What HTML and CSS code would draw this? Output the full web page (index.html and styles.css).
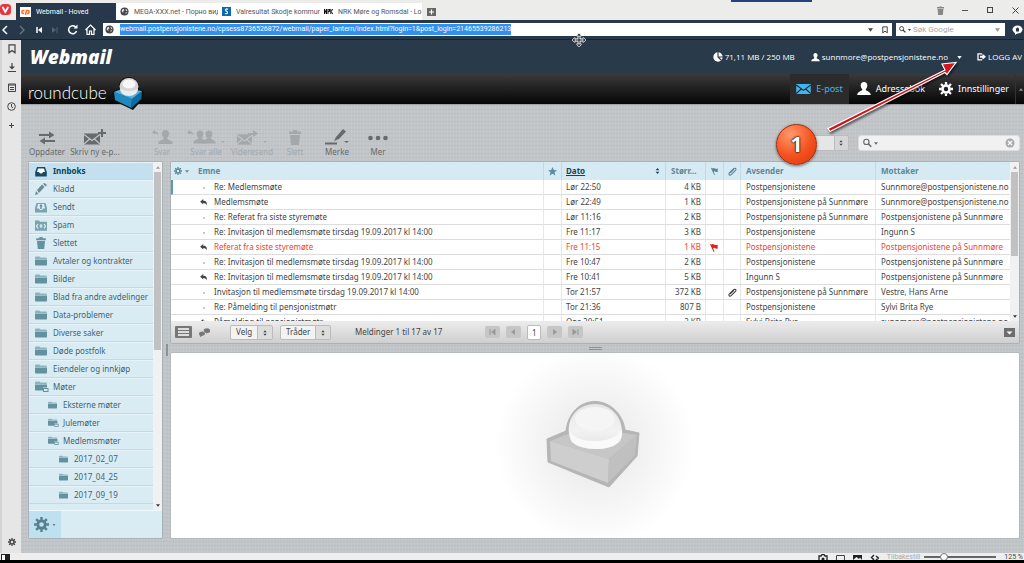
FILE: index.html
```html
<!DOCTYPE html>
<html lang="no">
<head>
<meta charset="utf-8">
<title>Webmail - Hoved</title>
<link rel="stylesheet" href="styles.css">
</head>
<body>
<svg class="sprite" aria-hidden="true">
  <symbol id="folder" viewBox="0 0 12 10"><path d="M0 1.5Q0 .5 1 .5h3.5l1 1H11q.8 0 .8.8V3H0z" fill="#8fb3bd"/><path d="M0 3.4h12V8.700q0 .8-.8.8H.8Q0 9.500 0 8.700z" fill="#63919d"/></symbol>
  <symbol id="folder-minus" viewBox="0 0 14 12"><path d="M0 1.5Q0 .5 1 .5h3.500l1 1H11q.8 0 .8.800V3H0z" fill="#8fb3bd"/><path d="M0 3.400h12V6.500H8V9.500H.8Q0 9.500 0 8.700z" fill="#63919d"/><rect x="8.500" y="7.500" width="4.500" height="3" fill="#d9ecf4" stroke="#63919d"/></symbol>
  <symbol id="globe" viewBox="0 0 10 10"><circle cx="5" cy="5" r="4.500" fill="#444"/><path d="M2 3l2-1 1 1.500L3.500 5 4 7 2 5zM6 2l2 1v2L6.500 4zM6 6l2-.5L6.500 8z" fill="#ddd"/></symbol>
  <symbol id="gear" viewBox="0 0 16 16"><g fill="none" stroke="currentColor"><circle cx="8" cy="8" r="4" stroke-width="3"/><path d="M8 0v3M8 13v3M0 8h3M13 8h3M2.300 2.300l2.200 2.200M11.500 11.500l2.200 2.200M2.300 13.700l2.200-2.200M11.500 4.500l2.200-2.200" stroke-width="2.600"/></g></symbol>
  <symbol id="updown" viewBox="0 0 6 8"><path d="M3 0l2.500 3h-5zM3 8L.5 5h5z" fill="currentColor"/></symbol>
  <symbol id="down" viewBox="0 0 6 4"><path d="M0 0h6L3 4z" fill="currentColor"/></symbol>
  <symbol id="up" viewBox="0 0 6 4"><path d="M0 4h6L3 0z" fill="currentColor"/></symbol>
  <symbol id="reply" viewBox="0 0 10 9"><path d="M4 0v2.200c4 0 5.500 2 4 6.300 0-2.500-1.300-3.500-4-3.500v2L0 3.500z" fill="currentColor"/></symbol>
  <symbol id="person" viewBox="0 0 14 14"><path d="M7 0c2 0 3.300 1.500 3.300 3.500 0 1.500-.6 2.800-1.500 3.600v1.200c1.200.8 4.700 1.300 5 4.700H.2c.3-3.400 3.800-3.900 5-4.700V7.100c-.9-.8-1.500-2.100-1.500-3.600C3.700 1.500 5 0 7 0z" fill="currentColor"/></symbol>
  <symbol id="mail" viewBox="0 0 16 11"><path d="M0 0h16v11H0z" fill="currentColor"/><path d="M0 1l8 6 8-6M0 10.500l5.500-5M16 10.500l-5.500-5" fill="none" stroke="var(--line)" stroke-width="1.200"/></symbol>
  <symbol id="trash" viewBox="0 0 12 15"><path d="M4 0h4v1.500h4V4H0V1.500h4zM1 5h10l-1 10H2z" fill="currentColor"/></symbol>
  <symbol id="clip" viewBox="0 0 10 10"><path d="M2.500 6.500l4-4M3.500 8.500l5-5c1-1.500-.5-2.800-2-1.800l-5 4.800c-1.300 1.500.5 3.500 2 2l4-4" fill="none" stroke="currentColor" stroke-width="1.200"/></symbol>
  <symbol id="flag" viewBox="0 0 10 10"><path d="M0 1.500L1.200 1l.6 1C3 .5 4 1.500 5 2s2 .2 3.500 0v4C7 6.800 6 6 5 5.500S3.800 6 3.500 6.500L5 9.500l-1 .5z" fill="currentColor"/></symbol>
  <symbol id="search" viewBox="0 0 12 12"><circle cx="4.500" cy="4.500" r="3.500" fill="none" stroke="currentColor" stroke-width="1.500"/><path d="M7 7l4 4" stroke="currentColor" stroke-width="2.200"/></symbol>
  <symbol id="bookmark" viewBox="0 0 8 10"><path d="M1 .8h6v8L4 6.500 1 8.800z" fill="none" stroke="currentColor" stroke-width="1.200"/></symbol>
</svg>

<div class="tabstrip">
  <span class="vivaldi"><svg width="11" height="11" viewBox="0 0 11 11"><rect width="11" height="11" rx="3.500" fill="#e5373f"/><path d="M2.800 3.500l2.500 4.500 2.600-4.500" fill="none" stroke="#fff" stroke-width="1.800" stroke-linecap="round"/></svg></span>
  <button class="tab active"><svg width="11" height="10" viewBox="0 0 11 10"><rect width="11" height="10" fill="#fff"/><path d="M4.500 3.500H3.300a1.500 1.500 0 000 3h.8M5.500 8l1-4.500h1.200a1.500 1.500 0 010 3H7" fill="none" stroke="#ff6c2c" stroke-width="1.500"/></svg><span>Webmail - Hoved</span></button>
  <button class="tab"><svg width="9" height="9"><use href="#globe"/></svg><span>MEGA-XXX.net - Порно вид</span></button>
  <button class="tab"><svg width="9" height="9" viewBox="0 0 9 9"><rect width="9" height="9" fill="#0d69a8"/><path d="M6 2.200C4 1.200 2.500 3 4.500 4.300s.8 3-1.500 2.200" fill="none" stroke="#fff" stroke-width="1.100"/></svg><span>Valresultat Skodje kommun</span></button>
  <button class="tab"><svg width="9" height="5" viewBox="0 0 9 5"><path d="M.5 5V0M2.500 5V0M.5 0l2 5M4 5V0h1.500v2.500H4M6.800 5V0M9 0L7 2.500 9 5" fill="none" stroke="#111"/></svg><span>NRK Møre og Romsdal - Lo</span></button>
  <button class="newtab" aria-label="Ny fane"><svg width="9" height="8" viewBox="0 0 9 8"><rect width="9" height="8" fill="#666"/><path d="M4.500 1.500v5M2 4h5" stroke="#fff" stroke-width="1.200"/></svg></button>
  <span class="peek"></span>
  <div class="window-controls">
    <button aria-label="Lukkede faner"><svg width="7" height="9" viewBox="0 0 12 15" color="#888"><use href="#trash"/></svg></button>
    <button aria-label="Minimer"><svg width="7" height="7"><path d="M0 3.500h6" stroke="#555"/></svg></button>
    <button aria-label="Maksimer"><svg width="7" height="7"><rect x=".5" y=".5" width="5" height="5" fill="none" stroke="#444"/></svg></button>
    <button aria-label="Lukk"><svg width="7" height="7"><path d="M.5.5l6 6M6.500.5l-6 6" stroke="#444"/></svg></button>
  </div>
</div>

<div class="navbar">
  <div class="nav-buttons">
    <button aria-label="Tilbake"><svg width="10" height="10"><path d="M7 1L3 5l4 4" fill="none" stroke="#fff" stroke-width="1.500"/></svg></button>
    <button aria-label="Frem"><svg width="10" height="10"><path d="M3 1l4 4-4 4" fill="none" stroke="#6c7882" stroke-width="1.300"/></svg></button>
    <button aria-label="Første"><svg width="10" height="10"><path d="M3 2v6" stroke="#fff" stroke-width="1.500"/><path d="M8 2v6L4 5z" fill="#fff"/></svg></button>
    <button aria-label="Siste"><svg width="10" height="10"><path d="M7 2v6" stroke="#56636f"/><path d="M2 2v6l4-3z" fill="#56636f"/></svg></button>
    <button aria-label="Last på nytt"><svg width="11" height="11"><path d="M9 3.500A4 4 0 109.500 7" fill="none" stroke="#fff" stroke-width="1.500"/><path d="M6.500 4.500H10.500V.5z" fill="#fff"/></svg></button>
    <button aria-label="Hjem"><svg width="11" height="11"><path d="M.5 6l5-5 5 5M2 5v5.300h2.500V7h2v3.300H9V5" fill="none" stroke="#fff" stroke-width="1.200"/></svg></button>
  </div>
  <div class="address">
    <svg class="site" width="9" height="9"><use href="#globe"/></svg>
    <input aria-label="Adresse" value="webmail.postpensjonistene.no/cpsess8736526872/webmail/paper_lantern/index.html?login=1&amp;post_login=21465539286213">
    <svg class="push" width="5" height="4" color="#444"><use href="#down"/></svg>
    <svg width="6" height="8" color="#333"><use href="#bookmark"/></svg>
  </div>
  <div class="web-search">
    <svg width="7" height="7" color="#333"><use href="#search"/></svg>
    <svg width="3" height="2" color="#333"><use href="#down"/></svg>
    <input aria-label="Søk" placeholder="Søk Google">
    <svg width="5" height="4" color="#999"><use href="#down"/></svg>
  </div>
  <svg class="bubble" width="11" height="10"><ellipse cx="5.500" cy="4.500" rx="5" ry="4" fill="#fff"/><path d="M3 7v3l4-3z" fill="#fff"/><path d="M4 6.500V4a1.500 1.500 0 013 0v2.500z" fill="#26384a"/></svg>
</div>

<div class="workspace">
  <nav class="rail">
    <button aria-label="Bokmerker"><svg width="8" height="10" color="#444"><use href="#bookmark"/></svg></button>
    <button aria-label="Nedlastinger"><svg width="8" height="10"><path d="M4 0v5M0 8.500h8" stroke="#444" stroke-width="1.200"/><path d="M1 3.500h6l-3 3z" fill="#444"/></svg></button>
    <button aria-label="Notater"><svg width="8" height="9"><path d="M.5 1h7v7.500h-7zM.5 2h7M2 4.500h4M2 6.500h4" fill="none" stroke="#444"/></svg></button>
    <button aria-label="Historikk"><svg width="9" height="9"><circle cx="4.500" cy="4.500" r="3.800" fill="none" stroke="#444"/><path d="M4.500 2v2.800l1.500 1" fill="none" stroke="#444"/></svg></button>
    <button aria-label="Legg til"><svg width="5" height="5"><path d="M2.500 0v5M0 2.500h5" stroke="#444"/></svg></button>
    <button class="rail-end" aria-label="Innstillinger"><svg width="8" height="8" color="#444"><use href="#gear"/></svg></button>
  </nav>

  <div class="page">
    <header class="cpanel">
      <a class="brand" href="#">Webmail</a>
      <span class="quota"><svg width="10" height="10"><circle cx="5" cy="5" r="4.700" fill="#fff"/><path d="M5 0v5l3.500 3.500M5 5h5" fill="none" stroke="#293a4a" stroke-width="1.100"/></svg>71,11 MB / 250 MB</span>
      <a class="user" href="#"><svg width="9" height="9"><use href="#person"/></svg>sunnmore@postpensjonistene.no</a>
      <button class="user-menu" aria-label="Brukermeny"><svg width="5" height="3"><use href="#down"/></svg></button>
      <a class="logout" href="#"><svg width="9" height="8"><path d="M5 .8H1v6h4" fill="none" stroke="#fff" stroke-width="1.300"/><path d="M3 2.800h2.500V.8L9 3.800 5.500 6.800v-2H3z" fill="#fff"/></svg>LOGG AV</a>
    </header>

    <header class="taskbar">
      <a class="logo" href="#">roundcube
        <svg width="32" height="33" viewBox="0 0 32 33">
          <path d="M0 15L7 12C6 4 11 0 17 0s11 5 10 12l5 2-1 8-10 11L2 24z" fill="#111"/>
          <path d="M2 15l18 7-.5 9L3 23z" fill="#1f8ac0"/><path d="M20 22l10-8-.7 8-9.800 9z" fill="#0e6ba6"/><path d="M2 15l10-4 18 3-10 8z" fill="#4fb2dc"/>
          <ellipse cx="17" cy="9.500" rx="9.500" ry="8.500" fill="#d3d4d4"/><ellipse cx="17" cy="7" rx="6.500" ry="4.500" fill="#f7f7f7"/><path d="M8 12q9 4 18 0-1 7-9 7t-9-7z" fill="#ececec"/>
        </svg>
      </a>
      <nav class="tasks">
        <a class="task current" href="#"><svg class="on-dark" width="15" height="10"><use href="#mail"/></svg>E-post</a>
        <a class="task" href="#"><svg width="14" height="14"><use href="#person"/></svg>Adressebok</a>
        <a class="task" href="#"><svg width="14" height="14"><use href="#gear"/></svg>Innstillinger</a>
        <button class="collapse" aria-label="Skjul"><svg width="4" height="3"><use href="#up"/></svg></button>
      </nav>
    </header>

    <main class="mail">
      <div class="toolbar">
        <button class="tool"><svg width="16" height="14"><path d="M0 4h11M5 10h11" stroke="currentColor" stroke-width="2"/><path d="M10 .5L15.500 4 10 7.500zM6 6.500L.5 10 6 13.500z" fill="currentColor"/></svg>Oppdater</button>
        <button class="tool compose"><svg class="on-light" width="22" height="16" viewBox="0 0 22 16"><svg y="4" width="16" height="12"><use href="#mail"/></svg><path d="M18 0v8M14 4h8" stroke="currentColor" stroke-width="2"/></svg>Skriv ny e-p...</button>
        <button class="tool reply-one" disabled><svg width="21" height="15" viewBox="0 0 21 15"><svg width="7" height="6"><use href="#reply"/></svg><svg x="6" width="15" height="15"><use href="#person"/></svg></svg>Svar</button>
        <button class="tool reply-all" disabled><svg width="38" height="15" viewBox="0 0 38 15"><svg width="7" height="6"><use href="#reply"/></svg><svg x="6" width="14" height="15"><use href="#person"/></svg><svg x="15" width="14" height="15"><use href="#person"/></svg><svg x="34" y="11" width="4" height="2"><use href="#down"/></svg></svg>Svar alle</button>
        <button class="tool forward" disabled><svg class="on-light" width="30" height="15" viewBox="0 0 30 15"><svg y="4" width="15" height="11"><use href="#mail"/></svg><path d="M11 3h5V0l5 3.500-5 3.500V5h-5z" fill="currentColor"/><svg x="26" y="11" width="4" height="2"><use href="#down"/></svg></svg>Videresend</button>
        <button class="tool delete" disabled><svg width="12" height="15"><use href="#trash"/></svg>Slett</button>
        <button class="tool mark"><svg width="24" height="16"><path d="M0 14.500h12" stroke="currentColor" stroke-width="2"/><path d="M9 12l2-4 7-8 3 2.500-7 7.500zM19 12h5l-2.500 2z" fill="currentColor"/></svg>Merke</button>
        <button class="tool more"><svg width="20" height="6"><circle cx="2.500" cy="3" r="2.300" fill="currentColor"/><circle cx="10" cy="3" r="2.300" fill="currentColor"/><circle cx="17.500" cy="3" r="2.300" fill="currentColor"/></svg>Mer</button>
        <span class="picker filter"><select aria-label="Filter"><option value=""></option></select><svg width="4" height="6"><use href="#updown"/></svg></span>
        <div class="mail-search"><svg width="9" height="10"><use href="#search"/></svg><svg width="4" height="3"><use href="#down"/></svg><input aria-label="Søk i e-post"><svg width="10" height="10"><circle cx="5" cy="5" r="4.500" fill="#aaa"/><path d="M3 3l4 4M7 3L3 7" stroke="#fff" stroke-width="1.200"/></svg></div>
      </div>

      <div class="panes">
        <aside class="folders">
          <div class="folder-scroll">
            <ul>
              <li class="selected"><a href="#"><svg width="12" height="11"><path d="M2 1h8l1.800 5v4.500H.2V6z" fill="#174a66"/><path d="M3 2.500h6L10 6H8q-.5 1.500-2 1.500T4 6H2z" fill="#fff"/></svg>Innboks</a></li>
              <li><a href="#"><svg width="12" height="12"><path d="M0 12l1-4 2.500 3zM2 7l5-5.500 2.500 2.500L4 10zM8 .8L9.500 0 12 2l-1.500 1.500z" fill="#6d8b94"/></svg>Kladd</a></li>
              <li><a href="#"><svg width="12" height="11"><path d="M1.500 1h9L12 6v4.500H0V6z" fill="#7ba2ad"/><path d="M3 2h6l1 4.500H8L7 8H5L4 6.500H2z" fill="#e3f2f8"/><path d="M6 2l2 2.300H6.800V7H5.200V4.300H4z" fill="#63919d"/></svg>Sendt</a></li>
              <li><a href="#"><svg width="12" height="11"><path d="M0 .5h4l1 1.200h7v9H0z" fill="#7ba2ad"/><path d="M3 4l-1.500 2L3 8.500M9 4l1.500 2L9 8.500M6 4v4M4.500 6h3" fill="none" stroke="#e3f2f8" stroke-width="1.200"/></svg>Spam</a></li>
              <li><a href="#"><svg width="12" height="12" color="#63919d"><use href="#trash"/></svg>Slettet</a></li>
              <li><a href="#"><svg width="12" height="10"><use href="#folder"/></svg>Avtaler og kontrakter</a></li>
              <li><a href="#"><svg width="12" height="10"><use href="#folder"/></svg>Bilder</a></li>
              <li><a href="#"><svg width="12" height="10"><use href="#folder"/></svg>Blad fra andre avdelinger</a></li>
              <li><a href="#"><svg width="12" height="10"><use href="#folder"/></svg>Data-problemer</a></li>
              <li><a href="#"><svg width="12" height="10"><use href="#folder"/></svg>Diverse saker</a></li>
              <li><a href="#"><svg width="12" height="10"><use href="#folder"/></svg>Døde postfolk</a></li>
              <li><a href="#"><svg width="12" height="10"><use href="#folder"/></svg>Eiendeler og innkjøp</a></li>
              <li class="parent"><a href="#"><svg width="14" height="12"><use href="#folder-minus"/></svg>Møter</a></li>
              <li class="level2"><a href="#"><svg width="9" height="8"><use href="#folder"/></svg>Eksterne møter</a></li>
              <li class="level2 parent"><a href="#"><svg width="11" height="10"><use href="#folder-minus"/></svg>Julemøter</a></li>
              <li class="level2 parent"><a href="#"><svg width="11" height="10"><use href="#folder-minus"/></svg>Medlemsmøter</a></li>
              <li class="level3"><a href="#"><svg width="9" height="8"><use href="#folder"/></svg>2017_02_07</a></li>
              <li class="level3"><a href="#"><svg width="9" height="8"><use href="#folder"/></svg>2017_04_25</a></li>
              <li class="level3"><a href="#"><svg width="9" height="8"><use href="#folder"/></svg>2017_09_19</a></li>
            </ul>
            <div class="scrollbar"><svg width="4" height="3"><use href="#up"/></svg><span class="thumb"></span><svg class="end" width="4" height="3"><use href="#down"/></svg></div>
          </div>
          <div class="folder-foot"><button aria-label="Mappehandlinger"><svg width="15" height="15"><use href="#gear"/></svg><svg width="4" height="2"><use href="#down"/></svg></button></div>
        </aside>
        <div class="splitter-v"></div>
        <div class="content">
          <section class="list">
            <div class="list-scroll">
              <div class="table-clip">
              <table>
                <colgroup><col class="c-subject"><col class="c-star"><col class="c-date"><col class="c-size"><col class="c-flag"><col class="c-clip"><col class="c-from"><col class="c-to"></colgroup>
                <thead><tr>
                  <th><div class="subject-head"><button aria-label="Listevalg"><svg width="8" height="8"><use href="#gear"/></svg><svg width="4" height="3"><use href="#down"/></svg></button>Emne</div></th>
                  <th class="mid"><svg width="9" height="9" viewBox="0 0 10 10"><path d="M5 0l1.500 3.300 3.500.3-2.700 2.300.8 3.600L5 7.600 1.900 9.500l.8-3.600L0 3.600l3.500-.3z" fill="#5c8fa6"/></svg></th>
                  <th><div class="date-head"><a href="#">Dato</a><svg width="5" height="6"><use href="#updown"/></svg></div></th>
                  <th>Størr...</th>
                  <th class="mid"><svg width="8" height="8"><use href="#flag"/></svg></th>
                  <th class="mid"><svg width="9" height="9"><use href="#clip"/></svg></th>
                  <th>Avsender</th><th>Mottaker</th>
                </tr></thead>
                <tbody>
                  <tr class="focused"><td><span class="state dot"></span>Re: Medlemsmøte</td><td></td><td>Lør 22:50</td><td>4 KB</td><td></td><td></td><td>Postpensjonistene</td><td>Sunnmore@postpensjonistene.no</td></tr>
                  <tr><td><span class="state"><svg width="8" height="7"><use href="#reply"/></svg></span>Medlemsmøte</td><td></td><td>Lør 22:49</td><td>1 KB</td><td></td><td></td><td>Postpensjonistene på Sunnmøre</td><td>Sunnmore@postpensjonistene.no</td></tr>
                  <tr><td><span class="state dot"></span>Re: Referat fra siste styremøte</td><td></td><td>Lør 11:16</td><td>2 KB</td><td></td><td></td><td>Postpensjonistene på Sunnmøre</td><td>Postpensjonistene på Sunnmøre</td></tr>
                  <tr><td><span class="state dot"></span>Re: Invitasjon til medlemsmøte tirsdag 19.09.2017 kl 14:00</td><td></td><td>Fre 11:17</td><td>3 KB</td><td></td><td></td><td>Postpensjonistene</td><td>Ingunn S</td></tr>
                  <tr class="flagged"><td><span class="state"><svg width="8" height="7"><use href="#reply"/></svg></span>Referat fra siste styremøte</td><td></td><td>Fre 11:15</td><td>1 KB</td><td class="mid"><svg width="9" height="9"><use href="#flag"/></svg></td><td></td><td>Postpensjonistene</td><td>Postpensjonistene på Sunnmøre</td></tr>
                  <tr><td><span class="state dot"></span>Re: Invitasjon til medlemsmøte tirsdag 19.09.2017 kl 14:00</td><td></td><td>Fre 10:47</td><td>2 KB</td><td></td><td></td><td>Postpensjonistene</td><td>Postpensjonistene på Sunnmøre</td></tr>
                  <tr><td><span class="state"><svg width="8" height="7"><use href="#reply"/></svg></span>Re: Invitasjon til medlemsmøte tirsdag 19.09.2017 kl 14:00</td><td></td><td>Fre 10:41</td><td>5 KB</td><td></td><td></td><td>Ingunn S</td><td>Postpensjonistene på Sunnmøre</td></tr>
                  <tr><td><span class="state dot"></span>Invitasjon til medlemsmøte tirsdag 19.09.2017 kl 14:00</td><td></td><td>Tor 21:57</td><td>372 KB</td><td></td><td class="mid"><svg width="9" height="9"><use href="#clip"/></svg></td><td>Postpensjonistene på Sunnmøre</td><td>Vestre, Hans Arne</td></tr>
                  <tr><td><span class="state dot"></span>Re: Påmelding til pensjonistmøtr</td><td></td><td>Tor 21:36</td><td>807 B</td><td></td><td></td><td>Postpensjonistene</td><td>Sylvi Brita Rye</td></tr>
                  <tr><td><span class="state"><svg width="8" height="7"><use href="#reply"/></svg></span>Påmelding til pensjonistmøtr</td><td></td><td>Ons 20:51</td><td>2 KB</td><td></td><td></td><td>Sylvi Brita Rye</td><td>sunnmore@postpensjonistene.no</td></tr>
                </tbody>
              </table>
              </div>
              <div class="scrollbar"><svg width="4" height="3"><use href="#up"/></svg><span class="thumb"></span><svg class="end" width="4" height="3"><use href="#down"/></svg></div>
            </div>
            <div class="list-foot">
              <button class="mode" aria-label="Liste"><svg width="17" height="12"><rect width="17" height="12" rx="1" fill="#777"/><path d="M3 3h11M3 6h11M3 9h11" stroke="#fff" stroke-width="1.300"/></svg></button>
              <button class="mode threads" aria-label="Samtaler"><svg width="11" height="9"><path d="M5 1q5-2 6 1t-3 3L7 6V5Q4 4 5 1zM1 4q3-1 4 0t1 2-3 2L1 9V8Q-1 5 1 4z" fill="#777"/></svg></button>
              <span class="picker"><select aria-label="Velg"><option>Velg</option></select><svg width="4" height="6"><use href="#updown"/></svg></span>
              <span class="picker wide"><select aria-label="Tråder"><option>Tråder</option></select><svg width="4" height="6"><use href="#updown"/></svg></span>
              <span class="count">Meldinger 1 til 17 av 17</span>
              <div class="pager">
                <button disabled aria-label="Første side"><svg width="7" height="6"><path d="M1 0v6M6 0v6" stroke="#999"/><path d="M6 0v6L2 3z" fill="#999"/></svg></button>
                <button disabled aria-label="Forrige side"><svg width="7" height="6"><path d="M5 0v6L1 3z" fill="#999"/></svg></button>
                <input aria-label="Side" value="1">
                <button disabled aria-label="Neste side"><svg width="7" height="6"><path d="M2 0v6l4-3z" fill="#999"/></svg></button>
                <button disabled aria-label="Siste side"><svg width="7" height="6"><path d="M1 0v6M6 0v6" stroke="#999"/><path d="M1 0v6l4-3z" fill="#999"/></svg></button>
              </div>
              <button class="mode preview-toggle" aria-label="Forhåndsvisning"><svg width="11" height="9"><rect width="11" height="9" fill="#6d6d6d"/><path d="M2.500 3.500h6l-3 3z" fill="#fff"/></svg></button>
            </div>
          </section>
          <div class="splitter-h"></div>
          <section class="preview">
            <svg width="150" height="150" viewBox="0 0 150 150">
              <defs><linearGradient id="ball" x1="0" y1="0" x2="0" y2="1"><stop offset="0" stop-color="#e6e6e6"/><stop offset=".6" stop-color="#f2f2f2"/><stop offset="1" stop-color="#e2e2e2"/></linearGradient></defs>
              <path d="M27 68l19-8C48 42 60 30.500 75 30.500S103 43 105 59l14 3-2 23-28 31L28 91z" fill="#b5b5b5" stroke="#b5b5b5" stroke-width="1"/>
              <path d="M30 70l18-7 56-1 13 2-28 24z" fill="#c6c6c6"/><path d="M30 70l59 18-1 24-57-22z" fill="#cecece"/><path d="M89 88l28-24-2 20-27 28z" fill="#c0c0c0"/>
              <path d="M49 63C47 44 60 33 75 33s27 12 27 28c0 11-12 17-26 17s-26-5-27-15z" fill="url(#ball)"/>
              <path d="M50 60q5 10 25 10t27-12q1 10-4 14-7 6-22 6-17 0-24-7-3-4-2-11z" fill="#f9f9f9"/>
              <ellipse cx="75" cy="48" rx="20" ry="12" fill="#f5f5f5"/>
            </svg>
          </section>
        </div>
      </div>
    </main>
  </div>
</div>

<footer class="status">
  <button class="panel-toggle" aria-label="Panel"><svg width="9" height="6"><rect x=".5" y=".5" width="8" height="7" fill="#fff" stroke="#222"/><path d="M4 0h5v6H4z" fill="#222"/></svg></button>
  <svg width="10" height="6"><path d="M1 6V2h2l1-1.500h2L7 2h2v4" fill="none" stroke="#222" stroke-width="1.300"/><circle cx="5" cy="5" r="1.500" fill="#222"/></svg>
  <svg width="9" height="6"><path d="M.5 6V1.500h8V6" fill="none" stroke="#444"/></svg>
  <svg width="9" height="6"><path d="M0 6V1h9v5L7 3.500 6 5 3.500 3z" fill="#222"/></svg>
  <svg width="9" height="6"><path d="M4 1L1.500 3.500 4 6M6 2l2.500 2L6 6" fill="none" stroke="#222" stroke-width="1.400"/></svg>
  <label for="zoom">Tilbakestill</label>
  <input id="zoom" type="range" min="20" max="500" value="135">
  <span>125 %</span>
</footer>

<svg class="cursor" width="14" height="14" viewBox="0 0 14 14"><path d="M7 1v12M1 7h12" stroke="#fff" stroke-width="3"/><path d="M7 1v12M1 7h12" stroke="#111" stroke-width="1"/><path d="M7 0l2.500 3h-5zM7 14l2.500-3h-5zM0 7l3-2.500v5zM14 7l-3-2.500v5z" fill="#111" stroke="#fff" stroke-width=".7"/></svg>
<svg class="arrow" width="150" height="80" viewBox="0 0 150 80"><path d="M8 69.500L125 11l-3-6L136 3.500l-9 12-2-2L10 72.500z" fill="#d0151c" stroke="#fff" stroke-width="1.200"/></svg>
<div class="marker">1</div>
</body>
</html>
```

FILE: styles.css
```css
* { box-sizing: border-box; }
body {
  margin: 0;
  height: 100vh;
  display: flex;
  flex-direction: column;
  position: relative;
  overflow: hidden;
  background: #ebebeb;
  font: 8px/12px "Noto Sans", sans-serif;
  color: #444;
}
button, input, select { font: inherit; color: inherit; border: 0; padding: 0; margin: 0; background: none; outline: 0; min-width: 0; }
a { color: inherit; text-decoration: none; }
svg { flex: none; display: block; }
.sprite { position: absolute; width: 0; height: 0; }

/* Browser chrome */
.tabstrip { display: flex; height: 20px; align-items: flex-end; background: #ececeb; color: #555; font: 7px/12px Roboto, sans-serif; flex: none; }
.vivaldi { width: 16px; height: 16px; flex: none; }
.tab { width: 102px; height: 17px; display: flex; align-items: center; gap: 5px; padding: 0 2px 0 4px; background: #fff; white-space: nowrap; flex: none; }
.tab.active { width: 100px; background: #26384a; color: #fff; }
.newtab { height: 17px; padding: 0 5px; }
.peek { width: 81px; height: 2px; background: #24427c; align-self: flex-start; margin-left: auto; }
.window-controls { display: flex; gap: 18px; height: 20px; align-items: center; padding: 0 5px 0 125px; }
.navbar { height: 20px; flex: none; display: flex; align-items: center; background: #26384a; border-bottom: 1px solid #17222d; padding-right: 1px; font: 7px/11px Roboto, sans-serif; }
.nav-buttons { width: 103px; display: flex; align-items: center; justify-content: space-between; padding: 0 7px 0 0; flex: none; }
.address { flex: 1; height: 13px; background: #fff; display: flex; align-items: center; gap: 9px; padding: 0 4px 0 2px; }
.address input { field-sizing: content; height: 11px; background: #3390f0; color: #fff; }
.address .site { margin-right: -3px; }
.push { margin-left: auto; }
.web-search { width: 109px; height: 13px; margin: 0 7px 0 4px; background: #fff; display: flex; align-items: center; gap: 2px; padding: 0 5px 0 3px; }
.web-search input { flex: 1; font-size: 8px; }
.web-search input::placeholder { color: #aaa; }

.workspace { flex: 1; min-height: 0; display: flex; }
.rail { width: 21px; flex: none; background: #e6e6e6; border-left: 2px solid #d3d3d3; display: flex; flex-direction: column; align-items: center; gap: 9px; padding: 4px 0 6px; }
.rail button { height: 10px; display: flex; align-items: center; }
.rail .rail-end { margin-top: auto; }
.page { flex: 1; min-width: 0; display: flex; flex-direction: column; }

/* Account header */
.cpanel { height: 34px; flex: none; background: #293a4a; color: #fff; display: flex; align-items: center; padding: 0 2px 0 9px; font: 8px/12px "Open Sans", sans-serif; }
.brand { font: italic 800 19px/24px "Open Sans", sans-serif; margin-right: auto; }
.quota, .user, .logout { display: flex; align-items: center; gap: 2px; }
.user { margin-left: 16px; }
.user-menu { margin: 0 15px 0 9px; }

/* Task bar */
.taskbar { height: 30px; flex: none; background: linear-gradient(#3a3a3a, #060606); color: #fff; display: flex; justify-content: space-between; font-size: 9px; }
.logo { display: flex; align-items: center; gap: 5px; padding: 4px 0 0 7px; font: 300 17px/26px "Lato", sans-serif; height: 34px; position: relative; z-index: 1; }
.tasks { display: flex; }
.task { display: flex; align-items: center; gap: 5px; padding: 0 6px; }
.task + .task { padding-left: 8px; }
.task.current { background: #2b2b2b; color: #3db8ef; }
.on-dark { --line: #222; }
.on-light { --line: #c1c5c8; }
.collapse { width: 9px; padding-left: 3px; border-left: 1px solid #333; color: #999; }

/* Mail */
.mail {
  flex: 1; min-height: 0; display: flex; flex-direction: column; padding: 0 4px 14px 7px;
  border-top: 1px solid #9fa3a5;
  background: repeating-linear-gradient(90deg, #ffffff10 0 1px, #0000 1px 3px), repeating-linear-gradient(#00000008 0 1px, #0000 1px 4px), #c1c5c8;
}
.toolbar { height: 56px; flex: none; display: flex; align-items: flex-end; padding-bottom: 3px; color: #666a6c; }
.tool { width: 38px; height: 32px; display: flex; flex-direction: column; align-items: center; justify-content: flex-end; gap: 1px; white-space: nowrap; line-height: 12px; }
.tool:disabled { color: #a3a8ab; }
.compose { width: 58px; }
.reply-one { width: 38px; margin-left: 19px; }
.reply-all { width: 50px; }
.forward { width: 42px; }
.delete { width: 44px; }
.mark { width: 40px; }
.more { width: 42px; gap: 5px; }
.picker { position: relative; display: flex; color: #444; }
.picker select { appearance: none; width: 43px; height: 15px; padding: 0 5px; border: 1px solid #bbb; border-radius: 2px; background: linear-gradient(90deg, #f3f3f3 0 26px, #bbb 26px 27px, #ddd 27px); }
.picker.wide select { width: 51px; background: linear-gradient(90deg, #f3f3f3 0 34px, #bbb 34px 35px, #ddd 35px); }
.picker svg { position: absolute; right: 6px; top: 5px; }
.picker.filter { margin: 0 9px 7px auto; }
.picker.filter select { width: 71px; height: 16px; background: linear-gradient(90deg, #e6e6e6 0 55px, #bbb 55px 56px, #d4d6d7 56px); }
.mail-search { width: 162px; height: 16px; margin-bottom: 7px; background: #f1f1f1; border: 1px solid #ddd; border-radius: 3px; display: flex; align-items: center; gap: 2px; padding: 0 4px; }
.mail-search input { flex: 1; }

.panes { flex: 1; min-height: 0; display: flex; }
.folders { width: 135px; flex: none; display: flex; flex-direction: column; background: #d9ecf4; border: 1px solid #a9b2b7; border-radius: 2px; overflow: hidden; color: #3f6470; }
.folder-scroll { flex: 1; min-height: 0; display: flex; }
.folders ul { flex: 1; margin: 0; padding: 0; list-style: none; overflow: hidden; }
.folders li { height: 18px; border-bottom: 1px solid #c3dae4; border-top: 1px solid #e6f4fa; }
.folders a { display: flex; align-items: center; height: 16px; gap: 6px; padding-left: 6px; white-space: nowrap; }
.folders .selected { background: #c4e0ee; color: #004458; font-weight: bold; }
.level2 a { padding-left: 19px; }
.level3 a { padding-left: 30px; }
.parent a { gap: 4px; }
.scrollbar { width: 9px; flex: none; background: #f1f1f1; display: flex; flex-direction: column; align-items: center; padding: 4px 0 3px; gap: 3px; color: #999; }
.thumb { width: 7px; height: 178px; background: #c1c1c1; }
.list .thumb { height: 84px; }
.scrollbar .end { margin-top: auto; color: #333; }
.folder-foot { height: 28px; flex: none; border-top: 1px solid #eef8fc; display: flex; }
.folder-foot button { width: 32px; background: #bfe0ee; display: flex; align-items: center; justify-content: center; gap: 3px; color: #56808d; }
.splitter-v { width: 7px; flex: none; background: linear-gradient(#8d9295, #8d9295) center / 2px 12px no-repeat; }
.content { flex: 1; min-width: 0; display: flex; flex-direction: column; }
.list { height: 183px; flex: none; display: flex; flex-direction: column; background: #fff; border: 1px solid #a9b2b7; border-radius: 2px; }
.list-scroll { flex: 1; min-height: 0; display: flex; }
.table-clip { flex: 1; min-width: 0; overflow: hidden; }
table { width: 100%; table-layout: fixed; border-collapse: separate; border-spacing: 0; }
.c-star { width: 18px; }
.c-date { width: 104px; }
.c-size { width: 40px; }
.c-flag { width: 18px; }
.c-clip { width: 17px; }
.c-from, .c-to { width: 135px; }
th { height: 18px; padding: 0 5px; text-align: left; background: #d6eaf3; color: #5c8699; border-left: 1px solid #c3dae4; font-weight: bold; white-space: nowrap; }
td { height: 15px; padding: 0 5px; border-left: 1px solid #e3e9ec; border-bottom: 1px solid #ddd; white-space: nowrap; line-height: 12px; overflow: hidden; }
th:first-child, td:first-child { border-left: 0; }
th:first-child { padding-left: 3px; }
td:first-child { padding-left: 29px; }
td:nth-child(4) { text-align: right; padding-right: 4px; }
td:nth-child(3), th:nth-child(3) { padding-left: 4px; }
.focused td:first-child { border-left: 2px solid #5a9bb5; padding-left: 27px; }
td.mid, th.mid { padding: 0; }
.mid svg { margin: 0 auto; }
.subject-head, .date-head { display: flex; align-items: center; }
.subject-head button { display: flex; align-items: center; gap: 3px; margin-right: 9px; }
.date-head { justify-content: space-between; }
.date-head, .date-head a { color: #17455f; }
.date-head a { text-decoration: underline; }
.state { display: inline-flex; align-items: center; vertical-align: middle; width: 14px; height: 8px; }
.dot::before { content: ""; width: 2px; height: 2px; margin-left: 3px; background: #bbb; border-radius: 1px; }
.flagged { color: #f2432c; }
.flagged .state { color: #444; }
.flagged .mid { color: #e0201b; }
.list-foot { height: 22px; flex: none; display: flex; align-items: center; background: linear-gradient(#ececec, #cfcfcf); padding: 0 4px; }
.threads { margin: 0 20px 0 7px; }
.picker + .picker { margin-left: 7px; }
.count { margin-left: 24px; }
.pager { display: flex; align-items: center; gap: 6px; margin-left: 43px; }
.pager button { width: 15px; height: 12px; border-radius: 2px; background: #c6c6c6; display: flex; align-items: center; justify-content: center; }
.pager input { width: 14px; height: 15px; background: #fff; border: 1px solid #bbb; border-radius: 2px; text-align: center; }
.preview-toggle { margin-left: auto; }
.splitter-h { height: 8px; flex: none; background: linear-gradient(#8d9295 0 1px, #0000 1px 2px, #8d9295 2px 3px) center / 13px 3px no-repeat; }
.preview { flex: 1; min-height: 0; background: radial-gradient(circle 100px at center, #e6e6e6, #fff); border: 1px solid #b5babd; border-radius: 2px; display: flex; align-items: center; justify-content: center; }

.status { height: 10px; flex: none; border-bottom: 3px solid #000; background: #eee; display: flex; align-items: center; gap: 8px; padding-right: 1px; overflow: hidden; font: 7px/8px Roboto, sans-serif; }
.panel-toggle { margin: 0 auto 0 1px; }
.status label { color: #aaa; }
.status input { appearance: none; width: 72px; height: 2px; background: #666; margin-left: -4px; }
.status input::-webkit-slider-thumb { appearance: none; width: 8px; height: 8px; border: 1px solid #777; border-radius: 4px; background: #fff; }

/* Annotations drawn over the page */
.cursor { position: absolute; left: 572px; top: 33px; }
.arrow { position: absolute; left: 820px; top: 59px; filter: drop-shadow(1px 2px 1px #0008); }
.marker { position: absolute; left: 776px; top: 124px; width: 41px; height: 41px; border: 1px solid #a32c0c; border-radius: 50%; background: radial-gradient(circle at 35% 25%, #ff9a6b, #f5501f 55%, #d93808); box-shadow: 0 1px 3px #0008; color: #fff; text-align: center; font: bold 21px/39px "Open Sans", sans-serif; text-shadow: 0 0 2px #000, 0 0 2px #000; }
```
